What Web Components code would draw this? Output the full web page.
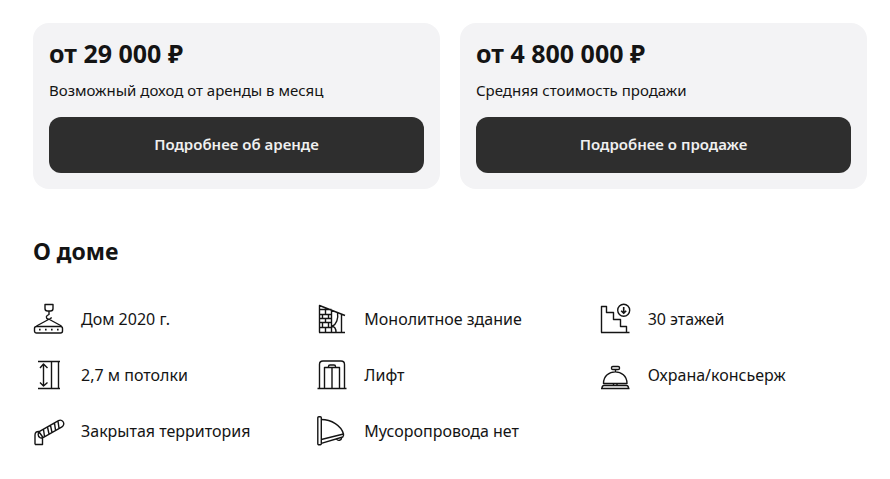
<!DOCTYPE html>
<html lang="ru">
<head>
<meta charset="utf-8">
<meta name="viewport" content="width=device-width, initial-scale=1">
<title>О доме</title>
<style>
body { margin: 0; background: #fff; color: #141414; font: 16px/22px "Noto Sans", "Open Sans", sans-serif; }
</style>
</head>
<body>
<house-page>
  <offer-card slot="offers"><span slot="price">от 29 000 ₽</span>Возможный доход от аренды в месяц<span slot="action">Подробнее об аренде</span></offer-card>
  <offer-card slot="offers"><span slot="price">от 4 800 000 ₽</span>Средняя стоимость продажи<span slot="action">Подробнее о продаже</span></offer-card>
  <span slot="heading">О доме</span>
  <house-feature icon="crane">Дом 2020 г.</house-feature>
  <house-feature icon="wall">Монолитное здание</house-feature>
  <house-feature icon="floors">30 этажей</house-feature>
  <house-feature icon="ceiling">2,7 м потолки</house-feature>
  <house-feature icon="lift">Лифт</house-feature>
  <house-feature icon="bell">Охрана/консьерж</house-feature>
  <house-feature icon="barrier">Закрытая территория</house-feature>
  <house-feature icon="chute">Мусоропровода нет</house-feature>
</house-page>
<script>
const ICONS = {
  crane: '<path d="M12 1.500h8v4q0 2.500-2.500 2.500h-3Q12 8 12 5.500zM16 8v3.500l-1.800 1q-1.400 1.200-.5 2.700 1 1.300 2.800 1 1.800-.5 1.800-2M15.500 16.500 3.500 23M16.500 16.500 28.500 23"/><rect x="1.500" y="23.500" width="28" height="6.500" rx="2"/><path stroke-width="1.800" d="M6 26.700h1.600M12 26.700h1.600M18 26.700h1.600M24 26.700h1.600"/>',
  wall: '<path d="M3.500 29.500v-27L29 12.500M3 29.500h26M3.500 6.500h12M3.500 11.500h12M3.500 15.500h12M3.500 19.500h12M3.500 24.500h12M15.500 7v22.500M9.500 6.500v5M6.500 11.500v4M12.500 11.500v4M9.500 15.500v4M6.500 19.500v5M12.500 19.500v5M9.500 24.500v5M21.500 9.500c1 6-1 12-5.500 14 2.500 0 4 2.500 4 6M25.500 11.500v18"/>',
  floors: '<path d="M1.500 29.500v-26h5v6h7v7h7v7h6v6M1 29.500h28.500"/><circle cx="23.700" cy="7.300" r="6"/><path stroke-width="1.600" d="M23.700 4v6M21.200 7.800l2.500 2.500 2.500-2.500"/>',
  ceiling: '<path d="M5 2.500h22M5 29.500h22M18.500 2.500v27M25.500 2.500v27M10.500 5v22M7 9l3.500-4L14.500 9M7 23.500l3.500 3.500 4-3.500"/>',
  lift: '<path d="M3.500 29.500V5.500q0-3.500 3.500-3.500h18q3.500 0 3.500 3.500v24M1.500 29.500h29M8.500 29.500v-21h15v21M16 8.500v21M12.500 8.500v-1q0-1.500 1.500-1.500h4q1.500 0 1.500 1.500v1"/>',
  bell: '<rect x="11.500" y="7.500" width="8" height="3" rx="1.300"/><path d="M15.500 10.500V13M3.500 24.500c0-15.500 23.500-15.500 23.500 0zM13.500 24.500v2M17 24.500v2M2 29.500q0-3 2-3h22.500q2 0 2 3M1 29.500h28.500"/>',
  barrier: '<path d="M7 22.700a3.800 3.800 0 0 1 0-6.500L25.500 5.700a3.500 3.500 0 0 1 3.500 6.100L10.500 22.300q-2 1.100-3.500.4M2 29.500V20q0-4 4.500-3.500M2 29.500h7.500v-7M6.500 17.500l3.500 5M10.500 14.500l1 7M14.500 12l1.500 7M17.500 10.500l1.500 7M21.500 8.200l1 7M25 6.200l1 7"/>',
  chute: '<rect x="1.800" y="1.800" width="3.500" height="28" rx="1"/><path d="M5.300 4.500c10 0 20 6 22.200 14.500L5.300 24.500M5.300 28.300 26.700 22q1.200-1.500.8-3M20.500 24.200c1.500 2 5 1.300 5.200-1.500"/>'
};

function define(name, html, setup) {
  const template = document.createElement('template');
  template.innerHTML = html;
  customElements.define(name, class extends HTMLElement {
    constructor() {
      super();
      this.attachShadow({ mode: 'open' }).append(template.content.cloneNode(true));
    }
    connectedCallback() { if (setup) setup(this); }
  });
}

define('house-page', `
  <style>
    :host { display: block; padding: 23px 23px 32px 33px; }
    .offers { display: grid; grid-template-columns: 1fr 1fr; gap: 20px; }
    h2 { margin: 48px 0 38px; font-size: 23px; line-height: 28px; font-weight: 700; }
    .features { display: grid; grid-template-columns: repeat(3, 1fr); gap: 24px 16px; }
  </style>
  <section class="offers"><slot name="offers"></slot></section>
  <section>
    <h2><slot name="heading"></slot></h2>
    <div class="features"><slot></slot></div>
  </section>`);

define('offer-card', `
  <style>
    :host { display: block; padding: 16px; border-radius: 16px; background: #f3f3f5; }
    h3 { margin: 0 0 12px; font-size: 25px; line-height: 28px; font-weight: 700; }
    p { margin: 0 0 16px; font-size: 15px; }
    button { display: block; width: 100%; height: 56px; padding: 0 16px 2px; border: 0; border-radius: 12px;
      background: #2e2e2e; color: #f0f0f0; font: inherit; font-size: 15px; font-weight: 600; cursor: pointer; }
  </style>
  <h3><slot name="price"></slot></h3>
  <p><slot></slot></p>
  <button type="button"><slot name="action"></slot></button>`);

define('house-feature', `
  <style>
    :host { display: flex; align-items: center; gap: 16px; }
    svg { flex: none; width: 32px; height: 32px; fill: none; stroke: #141414; stroke-width: 1.4;
      stroke-linejoin: round; }
  </style>
  <svg viewBox="0 0 32 32" aria-hidden="true"></svg>
  <span><slot></slot></span>`,
  el => { el.shadowRoot.querySelector('svg').innerHTML = ICONS[el.getAttribute('icon')]; });
</script>
</body>
</html>
